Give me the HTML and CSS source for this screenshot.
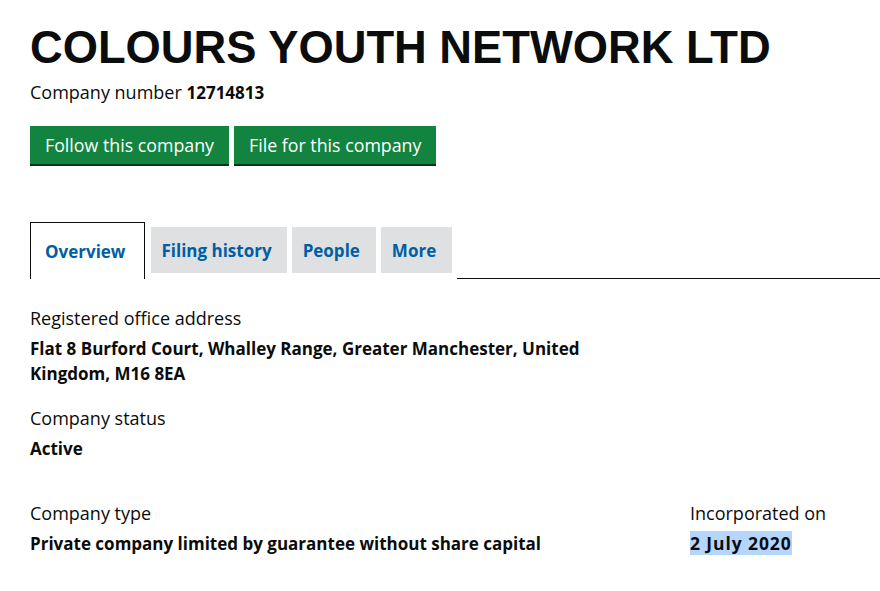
FILE: index.html
```html
<!DOCTYPE html>
<html lang="en">
<head>
<meta charset="utf-8">
<title>COLOURS YOUTH NETWORK LTD</title>
<link rel="stylesheet" href="styles.css">
</head>
<body>
<main class="page">
  <h1 class="title">COLOURS YOUTH NETWORK LTD</h1>
  <p class="number">Company number <strong>12714813</strong></p>
  <div class="actions">
    <a class="btn" href="#">Follow this company</a>
    <a class="btn" href="#">File for this company</a>
  </div>
  <nav class="tabs">
    <a class="tab tab-active" href="#">Overview</a>
    <a class="tab" href="#">Filing history</a>
    <a class="tab" href="#">People</a>
    <a class="tab" href="#">More</a>
    <span class="tab-rest"></span>
  </nav>
  <dl class="field">
    <dt>Registered office address</dt>
    <dd class="address">Flat 8 Burford Court, Whalley Range, Greater Manchester, United Kingdom, M16 8EA</dd>
  </dl>
  <dl class="field">
    <dt>Company status</dt>
    <dd>Active</dd>
  </dl>
  <div class="row">
    <dl class="field">
      <dt>Company type</dt>
      <dd>Private company limited by guarantee without share capital</dd>
    </dl>
    <dl class="field field-right">
      <dt>Incorporated on</dt>
      <dd><span class="selected">2 July 2020</span></dd>
    </dl>
  </div>
</main>
</body>
</html>
```
FILE: styles.css
```css
* { box-sizing: border-box; }
html, body { margin: 0; padding: 0; background: #fff; }
body {
  font-family: "Open Sans", "Liberation Sans", Arial, sans-serif;
  color: #0b0c0c;
}
.page { padding: 0 0 0 30px; }
.title {
  margin: 0;
  padding-top: 22px;
  font-family: "Liberation Sans", Arial, sans-serif;
  font-size: 45.3px;
  line-height: 52px;
  font-weight: 700;
}
.number {
  margin: 7px 0 0;
  font-size: 18px;
  line-height: 22px;
}
.number strong { font-size: 17px; }
.actions {
  display: flex;
  gap: 5px;
  margin-top: 22px;
}
.btn {
  display: block;
  background: #12843f;
  color: #fff;
  text-decoration: none;
  font-size: 17.8px;
  line-height: 20px;
  padding: 9px 15px 9px;
  height: 38px;
  box-shadow: 0 2px 0 #003618;
}
.tabs {
  display: flex;
  align-items: flex-start;
  margin-top: 58px;
}
.tab {
  display: block;
  background: #dee0e2;
  color: #005ea5;
  font-weight: 700;
  font-size: 17px;
  line-height: 20px;
  text-decoration: none;
  padding: 14px 16px 11px 11px;
  height: 46px;
  margin-top: 5px;
  margin-right: 5px;
}
.tab:nth-child(2) { padding: 14px 15px 11px 10px; }
.tab-active {
  background: #fff;
  margin-top: 0;
  height: 57px;
  padding: 19px 19px 18px 14px;
  border: 1px solid #0b0c0c;
  border-bottom: 0;
  margin-right: 6px;
}
.tab-rest {
  flex: 1;
  align-self: flex-end;
  border-bottom: 1px solid #0b0c0c;
}
.field { margin: 0; }
.field dt {
  font-size: 18px;
  line-height: 25px;
}
.field dd {
  margin: 5px 0 0;
  font-size: 17px;
  line-height: 25px;
  font-weight: 700;
}
.tabs + .field { margin-top: 27px; }
.address { max-width: 590px; }
.field + .field { margin-top: 20px; }
.row {
  display: flex;
  margin-top: 40px;
}
.row .field { width: 660px; }
.row .field-right { width: auto; margin-top: 0; }
.selected { background: #b4d5fe; letter-spacing: 0.9px; font-size: 17.5px; }
```
